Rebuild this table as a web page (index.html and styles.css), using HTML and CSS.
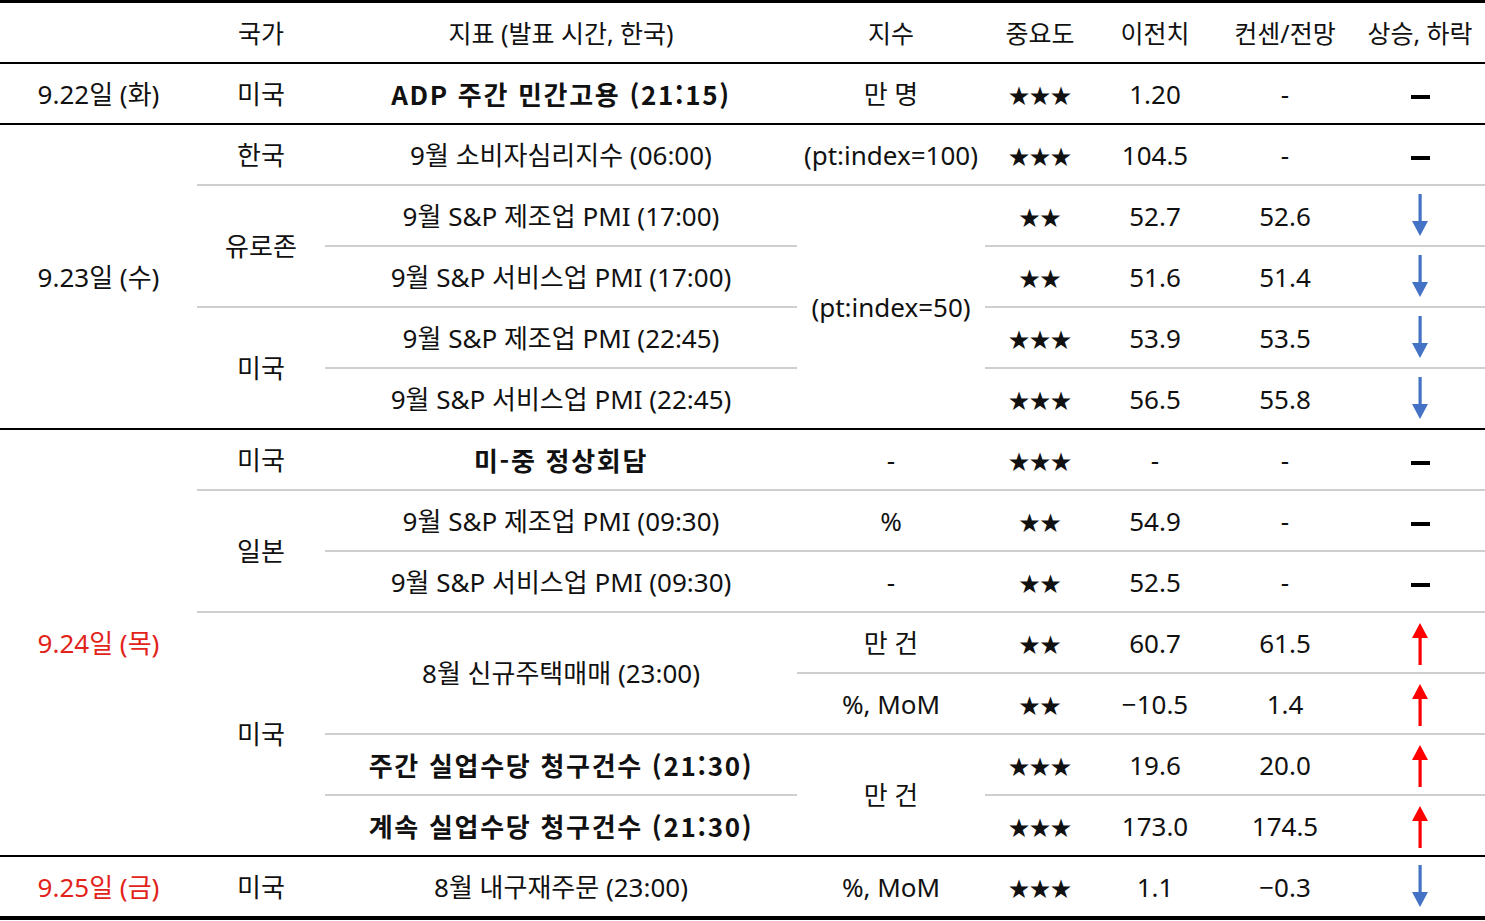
FILE: index.html
```html
<!DOCTYPE html>
<html lang="ko">
<head>
<meta charset="utf-8">
<title>주요 경제지표</title>
<link rel="stylesheet" href="styles.css">
</head>
<body>
<svg class="defs" width="0" height="0" aria-hidden="true">
  <defs>
    <symbol id="down" viewBox="0 0 24 44">
      <rect x="10.5" y="0" width="3.2" height="30" fill="#4472c4"/>
      <polygon points="4,27 20,27 12,42" fill="#4472c4"/>
    </symbol>
    <symbol id="up" viewBox="0 0 24 44">
      <rect x="10.5" y="14" width="3.2" height="30" fill="#ff0000"/>
      <polygon points="4,17 20,17 12,2" fill="#ff0000"/>
    </symbol>
  </defs>
</svg>
<table class="cal">
  <colgroup>
    <col class="c-date"><col class="c-nat"><col class="c-ind"><col class="c-idx">
    <col class="c-imp"><col class="c-prev"><col class="c-cons"><col class="c-dir">
  </colgroup>
  <thead>
    <tr>
      <th></th><th>국가</th><th>지표 (발표 시간, 한국)</th><th>지수</th>
      <th>중요도</th><th>이전치</th><th>컨센/전망</th><th>상승, 하락</th>
    </tr>
  </thead>
  <tbody>
    <tr class="grp">
      <td class="g">9.22일 (화)</td><td class="g">미국</td><td class="g b">ADP 주간 민간고용 (21:15)</td><td class="g">만 명</td>
      <td class="g star">★★★</td><td class="g">1.20</td><td class="g">-</td><td class="g"><span class="bar"></span></td>
    </tr>

    <tr>
      <td rowspan="5" class="g">9.23일 (수)</td><td class="l">한국</td><td class="l">9월 소비자심리지수 (06:00)</td><td class="l">(pt:index=100)</td>
      <td class="l star">★★★</td><td class="l">104.5</td><td class="l">-</td><td class="l"><span class="bar"></span></td>
    </tr>
    <tr>
      <td rowspan="2" class="l">유로존</td><td class="l">9월 S&amp;P 제조업 PMI (17:00)</td><td rowspan="4" class="g">(pt:index=50)</td>
      <td class="l star">★★</td><td class="l">52.7</td><td class="l">52.6</td><td class="l"><svg class="arr"><use href="#down"/></svg></td>
    </tr>
    <tr>
      <td class="l">9월 S&amp;P 서비스업 PMI (17:00)</td>
      <td class="l star">★★</td><td class="l">51.6</td><td class="l">51.4</td><td class="l"><svg class="arr"><use href="#down"/></svg></td>
    </tr>
    <tr>
      <td rowspan="2" class="g">미국</td><td class="l">9월 S&amp;P 제조업 PMI (22:45)</td>
      <td class="l star">★★★</td><td class="l">53.9</td><td class="l">53.5</td><td class="l"><svg class="arr"><use href="#down"/></svg></td>
    </tr>
    <tr>
      <td class="g">9월 S&amp;P 서비스업 PMI (22:45)</td>
      <td class="g star">★★★</td><td class="g">56.5</td><td class="g">55.8</td><td class="g"><svg class="arr"><use href="#down"/></svg></td>
    </tr>

    <tr>
      <td rowspan="7" class="g red">9.24일 (목)</td><td class="l">미국</td><td class="l b">미-중 정상회담</td><td class="l">-</td>
      <td class="l star">★★★</td><td class="l">-</td><td class="l">-</td><td class="l"><span class="bar"></span></td>
    </tr>
    <tr>
      <td rowspan="2" class="l">일본</td><td class="l">9월 S&amp;P 제조업 PMI (09:30)</td><td class="l">%</td>
      <td class="l star">★★</td><td class="l">54.9</td><td class="l">-</td><td class="l"><span class="bar"></span></td>
    </tr>
    <tr>
      <td class="l">9월 S&amp;P 서비스업 PMI (09:30)</td><td class="l">-</td>
      <td class="l star">★★</td><td class="l">52.5</td><td class="l">-</td><td class="l"><span class="bar"></span></td>
    </tr>
    <tr>
      <td rowspan="4" class="g">미국</td><td rowspan="2" class="l">8월 신규주택매매 (23:00)</td><td class="l">만 건</td>
      <td class="l star">★★</td><td class="l">60.7</td><td class="l">61.5</td><td class="l"><svg class="arr"><use href="#up"/></svg></td>
    </tr>
    <tr>
      <td class="l">%, MoM</td>
      <td class="l star">★★</td><td class="l">−10.5</td><td class="l">1.4</td><td class="l"><svg class="arr"><use href="#up"/></svg></td>
    </tr>
    <tr>
      <td class="l b">주간 실업수당 청구건수 (21:30)</td><td rowspan="2" class="g">만 건</td>
      <td class="l star">★★★</td><td class="l">19.6</td><td class="l">20.0</td><td class="l"><svg class="arr"><use href="#up"/></svg></td>
    </tr>
    <tr>
      <td class="g b">계속 실업수당 청구건수 (21:30)</td>
      <td class="g star">★★★</td><td class="g">173.0</td><td class="g">174.5</td><td class="g"><svg class="arr"><use href="#up"/></svg></td>
    </tr>

    <tr class="last">
      <td class="red">9.25일 (금)</td><td>미국</td><td>8월 내구재주문 (23:00)</td><td>%, MoM</td>
      <td class="star">★★★</td><td>1.1</td><td>−0.3</td><td><svg class="arr"><use href="#down"/></svg></td>
    </tr>
  </tbody>
</table>
</body>
</html>
```

FILE: styles.css
```css
html, body {
  margin: 0;
  padding: 0;
  background: #ffffff;
}

body {
  font-family: "Noto Sans", "Noto Sans CJK KR", sans-serif;
  color: #111111;
}

.defs {
  position: absolute;
  width: 0;
  height: 0;
}

.cal {
  width: 1485px;
  border-collapse: collapse;
  table-layout: fixed;
  border-top: 3px solid #000;
  border-bottom: 4px solid #000;
}

.c-date { width: 197px; }
.c-nat { width: 128px; }
.c-ind { width: 472px; }
.c-idx { width: 188px; }
.c-imp { width: 110px; }
.c-prev { width: 120px; }
.c-cons { width: 140px; }
.c-dir { width: 130px; }

.cal th,
.cal td {
  height: 59px;
  padding: 0;
  text-align: center;
  vertical-align: middle;
  font-size: 26px;
  font-weight: 400;
  line-height: 30px;
  white-space: nowrap;
}

.cal thead th {
  border-bottom: 2px solid #000;
  font-size: 25px;
}

.cal td.l {
  border-bottom: 2px solid #cfcfcf;
}

.cal td.g {
  border-bottom: 2px solid #000;
}

.cal td.b {
  font-family: "Noto Sans CJK KR", sans-serif;
  font-weight: 700;
  letter-spacing: 1.7px;
}

.cal td.star {
  font-family: "Noto Sans CJK KR", sans-serif;
  font-size: 21px;
  letter-spacing: 0;
}

.cal td.red {
  color: #e2231a;
}

.bar {
  display: inline-block;
  width: 19px;
  height: 4px;
  background: #000;
  vertical-align: middle;
}

.arr {
  width: 24px;
  height: 44px;
  vertical-align: middle;
}
```
